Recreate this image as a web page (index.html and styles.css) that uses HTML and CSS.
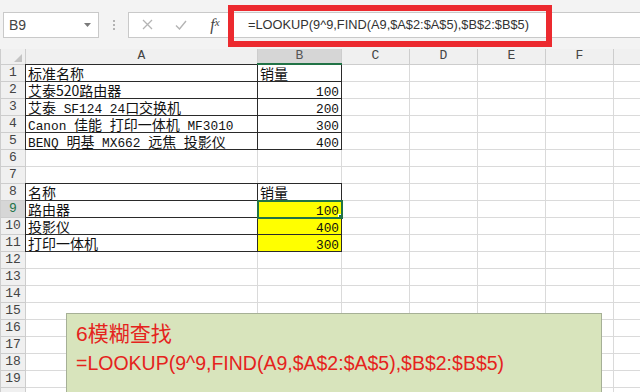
FILE: index.html
```html
<!DOCTYPE html>
<html lang="zh-CN">

<head>
  <meta charset="UTF-8">
  <meta name="viewport" content="width=device-width, initial-scale=1.0">
  <title>LOOKUP 模糊查找</title>

  <link rel="stylesheet" href="styles.css">
</head>

<body>
  <header class="toolbar">
    <div class="namebox">
      <span>B9</span>
      <svg class="caret" width="7" height="4" viewBox="0 0 7 4"><path d="M0 0h7L3.5 4z" fill="#7a7a7a"/></svg>
    </div>
    <div class="grip"><i></i><i></i><i></i></div>
    <div class="fbar">
      <span class="fbtn">
        <svg width="11" height="11" viewBox="0 0 11 11"><path d="M1 1l9 9M10 1l-9 9" stroke="#b4b4b4" stroke-width="1.3" fill="none"/></svg>
      </span>
      <span class="fbtn">
        <svg width="12" height="10" viewBox="0 0 12 10"><path d="M1 5.5l3.5 3.5L11 1" stroke="#b4b4b4" stroke-width="1.4" fill="none"/></svg>
      </span>
      <span class="fbtn fx">f<sub>x</sub></span>
      <div class="finput">=LOOKUP(9^9,FIND(A9,$A$2:$A$5),$B$2:$B$5)</div>
    </div>
    <div class="mark"></div>
  </header>

  <main class="sheet">
    <table class="grid">
      <colgroup>
        <col class="c-rh">
        <col class="c-a">
        <col class="c-b">
        <col class="c-n">
        <col class="c-n">
        <col class="c-n">
        <col class="c-n">
        <col class="c-g">
      </colgroup>
      <tr class="colhead">
        <th class="corner"><span class="tri"></span></th>
        <th>A</th>
        <th class="sel">B</th>
        <th>C</th>
        <th>D</th>
        <th>E</th>
        <th>F</th>
        <th></th>
      </tr>
      <tr>
        <th>1</th>
        <td class="box">标准名称</td>
        <td class="box">销量</td>
        <td></td><td></td><td></td><td></td><td></td>
      </tr>
      <tr>
        <th>2</th>
        <td class="box">艾泰520路由器</td>
        <td class="box num"><span class="lat">100</span></td>
        <td></td><td></td><td></td><td></td><td></td>
      </tr>
      <tr>
        <th>3</th>
        <td class="box">艾泰<span class="lat"> SF124 24</span>口交换机</td>
        <td class="box num"><span class="lat">200</span></td>
        <td></td><td></td><td></td><td></td><td></td>
      </tr>
      <tr>
        <th>4</th>
        <td class="box"><span class="lat">Canon </span>佳能<span class="lat"> </span>打印一体机<span class="lat"> MF3010</span></td>
        <td class="box num"><span class="lat">300</span></td>
        <td></td><td></td><td></td><td></td><td></td>
      </tr>
      <tr>
        <th>5</th>
        <td class="box"><span class="lat">BENQ </span>明基<span class="lat"> MX662 </span>远焦<span class="lat"> </span>投影仪</td>
        <td class="box num"><span class="lat">400</span></td>
        <td></td><td></td><td></td><td></td><td></td>
      </tr>
      <tr>
        <th>6</th>
        <td></td><td></td><td></td><td></td><td></td><td></td><td></td>
      </tr>
      <tr>
        <th>7</th>
        <td></td><td></td><td></td><td></td><td></td><td></td><td></td>
      </tr>
      <tr>
        <th>8</th>
        <td class="box">名称</td>
        <td class="box">销量</td>
        <td></td><td></td><td></td><td></td><td></td>
      </tr>
      <tr>
        <th class="sel">9</th>
        <td class="box">路由器</td>
        <td class="box num hl active"><span class="lat">100</span></td>
        <td></td><td></td><td></td><td></td><td></td>
      </tr>
      <tr>
        <th>10</th>
        <td class="box">投影仪</td>
        <td class="box num hl"><span class="lat">400</span></td>
        <td></td><td></td><td></td><td></td><td></td>
      </tr>
      <tr>
        <th>11</th>
        <td class="box">打印一体机</td>
        <td class="box num hl"><span class="lat">300</span></td>
        <td></td><td></td><td></td><td></td><td></td>
      </tr>
      <tr>
        <th>12</th>
        <td></td><td></td><td></td><td></td><td></td><td></td><td></td>
      </tr>
      <tr>
        <th>13</th>
        <td></td><td></td><td></td><td></td><td></td><td></td><td></td>
      </tr>
      <tr>
        <th>14</th>
        <td></td><td></td><td></td><td></td><td></td><td></td><td></td>
      </tr>
      <tr>
        <th>15</th>
        <td></td><td></td><td></td><td></td><td></td><td></td><td></td>
      </tr>
      <tr>
        <th>16</th>
        <td></td><td></td><td></td><td></td><td></td><td></td><td></td>
      </tr>
      <tr>
        <th>17</th>
        <td></td><td></td><td></td><td></td><td></td><td></td><td></td>
      </tr>
      <tr>
        <th>18</th>
        <td></td><td></td><td></td><td></td><td></td><td></td><td></td>
      </tr>
      <tr>
        <th>19</th>
        <td></td><td></td><td></td><td></td><td></td><td></td><td></td>
      </tr>
      <tr>
        <th></th>
        <td></td><td></td><td></td><td></td><td></td><td></td><td></td>
      </tr>
    </table>

    <div class="note">
      <p class="note-title">6模糊查找</p>
      <p class="note-formula">=LOOKUP(9^9,FIND(A9,$A$2:$A$5),$B$2:$B$5)</p>
    </div>
  </main>
</body>

</html>
```

FILE: styles.css
```css
body {
  background: #fff;
  font-family: "Noto Sans CJK SC", sans-serif;
  height: 392px;
  margin: 0;
  overflow: hidden;
  width: 640px;
}

.toolbar {
  align-items: center;
  background: #f3f3f3;
  display: flex;
  height: 49px;
  position: relative;
}

.namebox {
  align-items: center;
  background: #fff;
  border: 1px solid #c9c9c9;
  box-sizing: border-box;
  color: #444;
  display: flex;
  font-family: "Liberation Sans", sans-serif;
  font-size: 14px;
  height: 26px;
  justify-content: space-between;
  margin-left: 3px;
  padding: 0 7px 0 5px;
  width: 96px;
}

.grip {
  display: flex;
  flex-direction: column;
  gap: 2px;
  margin: 0 13px 0 14px;
}

.grip i {
  background: #b3b3b3;
  display: block;
  height: 2px;
  width: 2px;
}

.fbar {
  align-items: center;
  background: #fff;
  border: 1px solid #c9c9c9;
  border-right: none;
  box-sizing: border-box;
  display: flex;
  flex: 1;
  height: 26px;
}

.fbtn {
  display: flex;
  justify-content: center;
  width: 34px;
}

.fbtn:first-child {
  margin-left: 1px;
}

.fx {
  color: #444;
  font-family: "Liberation Serif", serif;
  font-size: 16px;
  font-style: italic;
  line-height: 1;
}

.fx sub {
  font-size: 11px;
  vertical-align: -1px;
}

.finput {
  color: #333;
  font-family: "Liberation Sans", sans-serif;
  font-size: 12.8px;
  padding-left: 16px;
}

.mark {
  border: 6px solid #ec2a2f;
  box-sizing: border-box;
  height: 42px;
  left: 228px;
  position: absolute;
  top: 5px;
  width: 324px;
}

.sheet {
  position: relative;
}

.grid {
  border-collapse: collapse;
  table-layout: fixed;
  width: 644px;
}

.c-rh { width: 25px; }
.c-a { width: 232px; }
.c-b { width: 84px; }
.c-n { width: 68px; }
.c-g { width: 31px; }

.grid tr {
  height: 17px;
}

.grid tr.colhead {
  height: 15px;
}

.grid th {
  background: #f0f0f0;
  border: 1px solid #cdcdcd;
  color: #444;
  font-family: "Liberation Mono", monospace;
  font-size: 13px;
  font-weight: normal;
  line-height: 16px;
  padding: 0;
}

.colhead th {
  border-top: none;
  line-height: 14px;
}

.grid th.sel {
  background: #d6d6d6;
  color: #217346;
}

.colhead th.sel {
  border-bottom: 2px solid #217346;
  color: #555;
}

.corner {
  position: relative;
}

.tri {
  border-bottom: 8px solid #c4c4c4;
  border-left: 8px solid transparent;
  bottom: 2px;
  position: absolute;
  right: 3px;
}

.grid td {
  border: 1px solid #dadada;
  color: #111;
  font-size: 14px;
  line-height: 16px;
  overflow: hidden;
  padding: 0 2px;
  white-space: pre;
}

.grid td.box {
  border: 1px double #2a2a2a;
}

.lat {
  font-family: "Liberation Mono", monospace;
  font-size: 12.8px;
  line-height: 0;
}

.num {
  text-align: right;
}

.hl {
  background: #ffff00;
}

.active {
  outline: 2px solid #217346;
  outline-offset: -1px;
  position: relative;
}

.active::after {
  background: #217346;
  border: 1px solid #fff;
  bottom: -4px;
  content: "";
  height: 5px;
  position: absolute;
  right: -4px;
  width: 5px;
}

.note {
  background: #d8e4bc;
  border: 1px solid #a6b096;
  box-sizing: border-box;
  height: 110px;
  left: 66px;
  padding: 6px 0 0 9px;
  position: absolute;
  top: 264px;
  width: 536px;
}

.note p {
  color: #e5231d;
  margin: 0;
}

.note-title {
  font-family: "Liberation Sans", "Noto Sans CJK SC", sans-serif;
  font-size: 21px;
  line-height: 28px;
}

.note-formula {
  font-family: "Liberation Sans", sans-serif;
  font-size: 19.5px;
  line-height: 30px;
  margin-top: 3px;
}
```
